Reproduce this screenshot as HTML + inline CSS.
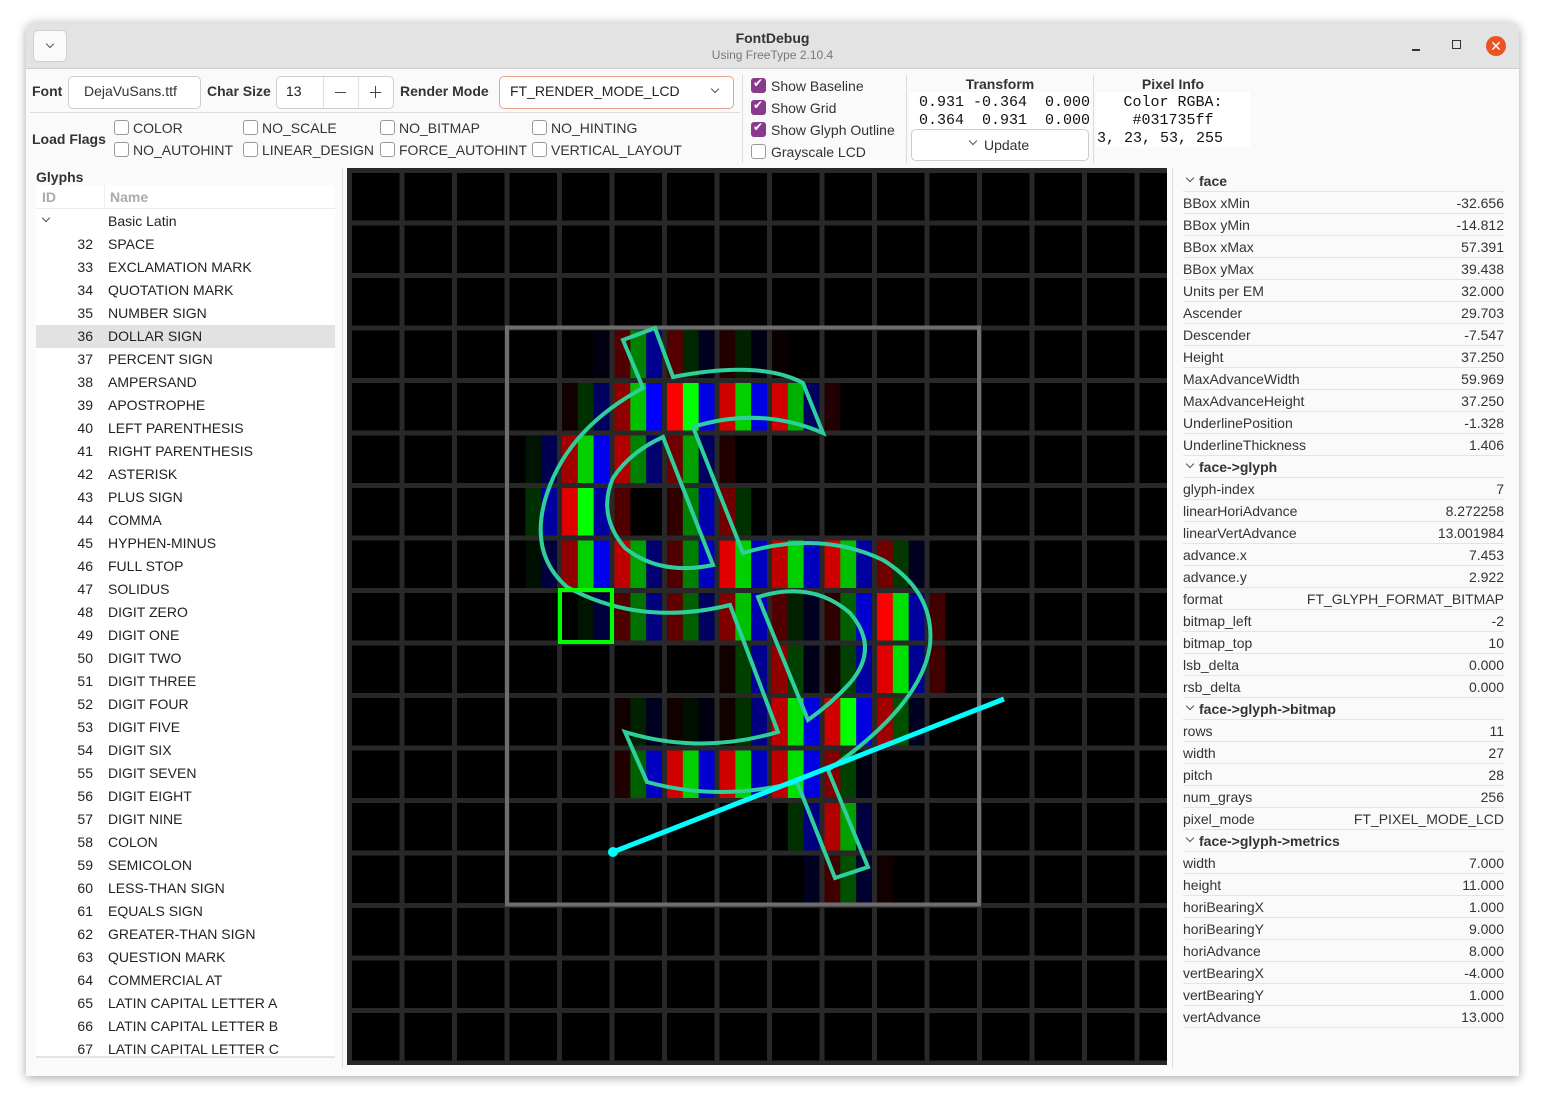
<!DOCTYPE html>
<html><head><meta charset="utf-8">
<style>
*{margin:0;padding:0;box-sizing:border-box}
body{width:1545px;height:1105px;background:#fff;font-family:"Liberation Sans",sans-serif;font-size:14px;color:#2a2a2a;position:relative;overflow:hidden}
.a{position:absolute}
#win{position:absolute;left:26px;top:22px;width:1493px;height:1054px;background:#fafafa;border-radius:10px 10px 0 0;box-shadow:0 2px 10px rgba(0,0,0,.35);overflow:hidden}
#tb{position:absolute;left:0;top:0;width:1493px;height:47px;background:#e3e3e3;border-bottom:1px solid #cfcfcf}
.lbl{position:absolute;font-weight:bold;font-size:14px;color:#333}
.box{position:absolute;background:#fff;border:1px solid #cdcdcd;border-radius:5px}
.cb{position:absolute;width:15px;height:15px;border:1px solid #9a9a9a;border-radius:3px;background:#fff}
.cbt{position:absolute;font-size:14px;color:#333}
.ck{position:absolute;width:15px;height:15px;border-radius:3px;background:#8a3a8c}
.mono{font-family:"Liberation Mono",monospace;font-size:15px;color:#111;white-space:pre}
.row{position:absolute;left:36px;width:299px;height:23px;font-size:14px;color:#222}
.row .i{position:absolute;right:242px;top:3px}
.row .n{position:absolute;left:72px;top:3px}
.pr{position:absolute;left:1183px;width:321px;height:22px;border-bottom:1px solid #e4e4e4;font-size:14px;color:#333}
.pr .k{position:absolute;left:0;top:3px}
.pr .v{position:absolute;right:0;top:3px}
.pr.h .k{left:16px;font-weight:bold}
.chev{position:absolute;width:7px;height:7px;border-right:1.3px solid #555;border-bottom:1.3px solid #555;transform:rotate(45deg)}
</style></head><body>
<div id="win">
 <div id="tb">
  <div class="a" style="left:7px;top:8px;width:34px;height:32px;background:#fafafa;border:1px solid #cfcfcf;border-radius:5px"></div>
  <div class="chev" style="left:21px;top:19px;width:6px;height:6px"></div>
  <div class="a" style="left:0;width:1493px;top:8px;text-align:center;font-weight:bold;font-size:14px;color:#333">FontDebug</div>
  <div class="a" style="left:0;width:1493px;top:26px;text-align:center;font-size:12px;color:#777">Using FreeType 2.10.4</div>
  <div class="a" style="left:1386px;top:27px;width:8px;height:1.5px;background:#333"></div>
  <div class="a" style="left:1426px;top:18px;width:9px;height:9px;border:1.5px solid #333"></div>
  <div class="a" style="left:1460px;top:14px;width:20px;height:20px;border-radius:50%;background:#e95420;color:#fff;text-align:center;font-size:14px;line-height:20px">✕</div>
 </div>
</div>
<!-- toolbar -->
<div class="lbl" style="left:32px;top:83px">Font</div>
<div class="box" style="left:68px;top:76px;width:133px;height:33px"></div>
<div class="a" style="left:84px;top:83px;color:#333">DejaVuSans.ttf</div>
<div class="lbl" style="left:207px;top:83px">Char Size</div>
<div class="box" style="left:276px;top:76px;width:118px;height:33px"></div>
<div class="a" style="left:323px;top:77px;width:1px;height:31px;background:#e0e0e0"></div>
<div class="a" style="left:358px;top:77px;width:1px;height:31px;background:#e0e0e0"></div>
<div class="a" style="left:286px;top:83px;color:#222">13</div>
<div class="a" style="left:335px;top:92px;width:11px;height:1.3px;background:#444"></div>
<div class="a" style="left:370px;top:92px;width:11px;height:1.3px;background:#444"></div>
<div class="a" style="left:375px;top:86px;width:1.3px;height:12px;background:#444"></div>
<div class="lbl" style="left:400px;top:83px">Render Mode</div>
<div class="box" style="left:499px;top:76px;width:235px;height:33px;border:1.5px solid #e8a088"></div>
<div class="a" style="left:510px;top:83px;color:#222">FT_RENDER_MODE_LCD</div>
<div class="chev" style="left:712px;top:86px;width:6px;height:6px"></div>
<div class="a" style="left:30px;top:112px;width:710px;height:1px;background:#dcdcdc"></div>
<div class="lbl" style="left:32px;top:131px">Load Flags</div>
<div class="cb" style="left:114px;top:120px"></div><div class="cbt" style="left:133px;top:120px">COLOR</div>
<div class="cb" style="left:243px;top:120px"></div><div class="cbt" style="left:262px;top:120px">NO_SCALE</div>
<div class="cb" style="left:380px;top:120px"></div><div class="cbt" style="left:399px;top:120px">NO_BITMAP</div>
<div class="cb" style="left:532px;top:120px"></div><div class="cbt" style="left:551px;top:120px">NO_HINTING</div>
<div class="cb" style="left:114px;top:142px"></div><div class="cbt" style="left:133px;top:142px">NO_AUTOHINT</div>
<div class="cb" style="left:243px;top:142px"></div><div class="cbt" style="left:262px;top:142px">LINEAR_DESIGN</div>
<div class="cb" style="left:380px;top:142px"></div><div class="cbt" style="left:399px;top:142px">FORCE_AUTOHINT</div>
<div class="cb" style="left:532px;top:142px"></div><div class="cbt" style="left:551px;top:142px">VERTICAL_LAYOUT</div>
<div class="a" style="left:742px;top:75px;width:1px;height:88px;background:#dcdcdc"></div>
<div class="a" style="left:906px;top:75px;width:1px;height:88px;background:#dcdcdc"></div>
<div class="a" style="left:1093px;top:75px;width:1px;height:88px;background:#dcdcdc"></div>
<div class="ck" style="left:751px;top:78px"></div><div class="cbt" style="left:753px;top:76px;color:#fff;font-size:12px">✔</div><div class="cbt" style="left:771px;top:78px">Show Baseline</div>
<div class="ck" style="left:751px;top:100px"></div><div class="cbt" style="left:753px;top:98px;color:#fff;font-size:12px">✔</div><div class="cbt" style="left:771px;top:100px">Show Grid</div>
<div class="ck" style="left:751px;top:122px"></div><div class="cbt" style="left:753px;top:120px;color:#fff;font-size:12px">✔</div><div class="cbt" style="left:771px;top:122px">Show Glyph Outline</div>
<div class="cb" style="left:751px;top:144px"></div><div class="cbt" style="left:771px;top:144px">Grayscale LCD</div>
<div class="lbl" style="left:910px;width:180px;text-align:center;top:76px">Transform</div>
<div class="a mono" style="left:910px;top:92px;width:180px;height:37px;background:#fff;padding-left:9px;padding-top:2px;line-height:18px">0.931 -0.364  0.000
0.364  0.931  0.000</div>
<div class="box" style="left:911px;top:129px;width:178px;height:32px;border-radius:5px"></div>
<div class="chev" style="left:970px;top:138px;width:6px;height:6px"></div>
<div class="a" style="left:984px;top:137px;color:#333">Update</div>
<div class="lbl" style="left:1096px;width:154px;text-align:center;top:76px">Pixel Info</div>
<div class="a mono" style="left:1096px;top:92px;width:154px;height:55px;background:#fff;padding-top:2px;line-height:18px;text-align:center">Color RGBA:
#031735ff
</div>
<div class="a mono" style="left:1097px;top:130px">3, 23, 53, 255</div>
<!-- glyph list -->
<div class="lbl" style="left:36px;top:169px">Glyphs</div>
<div class="a" style="left:36px;top:185px;width:299px;height:873px;background:#fff;border-bottom:2px solid #e4e4e4"></div>
<div class="a" style="left:104px;top:185px;width:1px;height:23px;background:#f0f0f0"></div>
<div class="a" style="left:36px;top:208px;width:299px;height:1px;background:#ececec"></div>
<div class="a" style="left:42px;top:189px;font-weight:bold;color:#aaa">ID</div>
<div class="a" style="left:110px;top:189px;font-weight:bold;color:#aaa">Name</div>
<div class="a" style="left:342px;top:168px;width:1px;height:900px;background:#dcdcdc"></div>
<div class="a" style="left:1172px;top:168px;width:1px;height:900px;background:#dcdcdc"></div>
<div class="a" style="left:1173px;top:168px;width:340px;height:900px;background:#fafafa"></div>
<div id="list"></div>
<div id="props"></div>
<!-- canvas -->
<svg class="a" style="left:347px;top:168px" width="820" height="897" viewBox="347 168 820 897">
<rect x="347" y="168" width="820" height="897" fill="#000"/>
<g id="px"></g>
<g id="grid" fill="#282828"></g>
<rect x="507" y="327.5" width="472" height="577" fill="none" stroke="#6e6e6e" stroke-width="4"/>
<path d="M623,340 L655,328 L673,377 Q760,360 803,383 L823,433 Q760,406 693,427 L743,553 Q820,530 883,560 Q935,592 930,645 Q922,705 828,770 L868,867 L835,878 L797,782 Q720,802 647,782 L625,732 Q700,755 778,732 L730,605 Q640,627 567,587 Q530,555 545,500 Q565,430 643,388 Z M663,437 L713,565 Q660,576 625,548 Q597,515 613,478 Q630,452 663,437 Z M758,597 Q812,580 850,613 Q880,648 850,683 Q832,703 808,720 Z" fill="none" stroke="#2fcf9c" stroke-width="4" stroke-linejoin="miter"/>
<rect x="560" y="590" width="52" height="52" fill="none" stroke="#00ff00" stroke-width="4"/>
<line x1="613" y1="852" x2="1004" y2="699" stroke="#00ffff" stroke-width="5"/>
<circle cx="613" cy="852" r="5" fill="#00ffff"/>
</svg>
<script>
var names=["SPACE","EXCLAMATION MARK","QUOTATION MARK","NUMBER SIGN","DOLLAR SIGN","PERCENT SIGN","AMPERSAND","APOSTROPHE","LEFT PARENTHESIS","RIGHT PARENTHESIS","ASTERISK","PLUS SIGN","COMMA","HYPHEN-MINUS","FULL STOP","SOLIDUS","DIGIT ZERO","DIGIT ONE","DIGIT TWO","DIGIT THREE","DIGIT FOUR","DIGIT FIVE","DIGIT SIX","DIGIT SEVEN","DIGIT EIGHT","DIGIT NINE","COLON","SEMICOLON","LESS-THAN SIGN","EQUALS SIGN","GREATER-THAN SIGN","QUESTION MARK","COMMERCIAL AT","LATIN CAPITAL LETTER A","LATIN CAPITAL LETTER B","LATIN CAPITAL LETTER C"];
var h='<div class="row" style="top:210px"><div class="chev" style="left:7px;top:5px;width:6px;height:6px"></div><div class="n">Basic Latin</div></div>';
for(var i=0;i<names.length;i++){var t=233+23*i;var bg=(i==4)?'background:#e2e2e2;':'';
h+='<div class="row" style="top:'+t+'px;'+bg+'"><div class="i">'+(32+i)+'</div><div class="n">'+names[i]+'</div></div>';}
document.getElementById('list').innerHTML=h;
var P=[["H","face"],["BBox xMin","-32.656"],["BBox yMin","-14.812"],["BBox xMax","57.391"],["BBox yMax","39.438"],["Units per EM","32.000"],["Ascender","29.703"],["Descender","-7.547"],["Height","37.250"],["MaxAdvanceWidth","59.969"],["MaxAdvanceHeight","37.250"],["UnderlinePosition","-1.328"],["UnderlineThickness","1.406"],["H","face->glyph"],["glyph-index","7"],["linearHoriAdvance","8.272258"],["linearVertAdvance","13.001984"],["advance.x","7.453"],["advance.y","2.922"],["format","FT_GLYPH_FORMAT_BITMAP"],["bitmap_left","-2"],["bitmap_top","10"],["lsb_delta","0.000"],["rsb_delta","0.000"],["H","face->glyph->bitmap"],["rows","11"],["width","27"],["pitch","28"],["num_grays","256"],["pixel_mode","FT_PIXEL_MODE_LCD"],["H","face->glyph->metrics"],["width","7.000"],["height","11.000"],["horiBearingX","1.000"],["horiBearingY","9.000"],["horiAdvance","8.000"],["vertBearingX","-4.000"],["vertBearingY","1.000"],["vertAdvance","13.000"]];
h='';for(i=0;i<P.length;i++){var t=170+22*i;
if(P[i][0]=="H")h+='<div class="pr h" style="top:'+t+'px"><div class="chev" style="left:4px;top:5px;width:6px;height:6px"></div><div class="k">'+P[i][1].replace(/>/g,'&gt;')+'</div></div>';
else h+='<div class="pr" style="top:'+t+'px"><div class="k">'+P[i][0]+'</div><div class="v">'+P[i][1]+'</div></div>';}
document.getElementById('props').innerHTML=h;
var D=[
[3,4,0,0,0x10],[3,5,0x50,0x80,0x90],[3,6,0x55,0x28,0x20],[3,7,0x20,0x22,0x15],[3,8,0x0a,0,0],
[4,4,0x10,0x30,0x60],[4,5,0x90,0xc0,0xff],[4,6,0xff,0xff,0xe0],[4,7,0xd0,0xd0,0xe0],[4,8,0xd0,0xb0,0x60],[4,9,0x20,0,0],
[5,3,0,0x14,0x50],[5,4,0xa0,0xd0,0xf0],[5,5,0xb0,0x80,0x70],[5,6,0x70,0xa0,0x60],[5,7,0x20,0,0],
[6,3,0,0x30,0xa0],[6,4,0xe0,0xff,0xa0],[6,5,0x50,0,0],[6,6,0x30,0x80,0xb0],[6,7,0x70,0x30,0],
[7,3,0,0x10,0x40],[7,4,0x90,0xd0,0xf0],[7,5,0xc0,0xa0,0x70],[7,6,0x50,0x80,0xc0],[7,7,0xe0,0xd0,0xc0],[7,8,0xc0,0xd0,0xc0],[7,9,0xd0,0xc0,0xa0],[7,10,0x70,0x38,0x20],
[8,4,0,0x14,0x40],[8,5,0x50,0x70,0x80],[8,6,0x60,0x60,0x60],[8,7,0x80,0xc0,0xb0],[8,8,0x50,0x20,0x20],[8,9,0x30,0x60,0xd0],[8,10,0xff,0xe0,0xa0],[8,11,0x40,0,0],
[9,7,0x10,0x40,0x90],[9,8,0x90,0x40,0x18],[9,9,0x10,0x40,0xa0],[9,10,0xe0,0xe0,0x90],[9,11,0x40,0,0],
[10,5,0x10,0x20,0x20],[10,6,0x10,0x10,0x10],[10,7,0x10,0x30,0x80],[10,8,0xc0,0xe0,0xe0],[10,9,0xd0,0xff,0xe0],[10,10,0xa0,0x50,0x20],
[11,5,0x20,0x60,0xc0],[11,6,0xd0,0xd0,0xd0],[11,7,0xd0,0xd0,0xc0],[11,8,0xc0,0xe0,0xe0],[11,9,0x80,0x40,0x10],
[12,8,0,0x30,0x80],[12,9,0xb0,0xa0,0x40],
[13,8,0,0,0x20],[13,9,0x40,0x50,0x30],[13,10,0x10,0,0]];
var s='';for(i=0;i<D.length;i++){var d=D[i];var x0=352+52.5*d[1],y0=173+52.5*d[0],w=47.5/3;
var cs=['rgb('+d[2]+',0,0)','rgb(0,'+d[3]+',0)','rgb(0,0,'+d[4]+')'];
for(var k=0;k<3;k++)s+='<rect x="'+(x0+k*w)+'" y="'+y0+'" width="'+(w+0.3)+'" height="47.5" fill="'+cs[k]+'"/>';}
document.getElementById('px').innerHTML=s;
var g='';for(i=0;i<17;i++)g+='<rect x="'+(347+52.5*i)+'" y="168" width="5" height="897"/>';
for(i=0;i<18;i++)g+='<rect x="347" y="'+(168+52.5*i)+'" width="820" height="5"/>';
document.getElementById('grid').innerHTML=g;
</script>
</body></html>
